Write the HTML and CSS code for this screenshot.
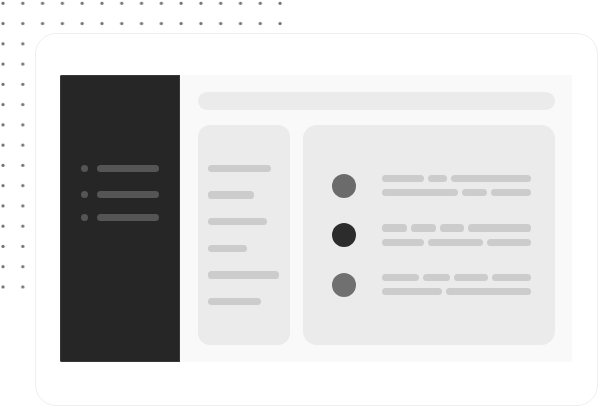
FILE: index.html
```html
<!DOCTYPE html>
<html>
<head>
<meta charset="utf-8">
<link rel="stylesheet" href="styles.css">
</head>
<body>
<svg class="dots" width="290" height="295" viewBox="0 0 290 295">
  <defs>
    <pattern id="dot" x="0" y="0" width="19.79" height="20.26" patternUnits="userSpaceOnUse">
      <circle cx="3" cy="3.3" r="1.6" fill="#707070"/>
    </pattern>
  </defs>
  <rect width="290" height="295" fill="url(#dot)"/>
</svg>
<div class="card">
  <div class="window">
    <aside class="sidebar">
      <div class="nav-item first"><span class="nav-dot"></span><span class="nav-line"></span></div>
      <div class="nav-item"><span class="nav-dot"></span><span class="nav-line"></span></div>
      <div class="nav-item"><span class="nav-dot"></span><span class="nav-line"></span></div>
    </aside>
    <main class="main">
      <div class="search"></div>
      <div class="panels">
        <div class="list-panel">
          <span class="bar" style="width:63px"></span>
          <span class="bar" style="width:46px"></span>
          <span class="bar" style="width:59px"></span>
          <span class="bar" style="width:39px"></span>
          <span class="bar" style="width:71px"></span>
          <span class="bar" style="width:53px"></span>
        </div>
        <div class="feed-panel">
          <div class="feed-row">
            <span class="avatar mid"></span>
            <div class="lines">
              <div class="line"><span class="seg" style="width:41.7px"></span><span class="seg" style="width:18.7px"></span><span class="seg grow"></span></div>
              <div class="line"><span class="seg" style="width:75.4px"></span><span class="seg" style="width:25px"></span><span class="seg grow"></span></div>
            </div>
          </div>
          <div class="feed-row">
            <span class="avatar dark"></span>
            <div class="lines">
              <div class="line"><span class="seg" style="width:24.7px"></span><span class="seg" style="width:24.7px"></span><span class="seg" style="width:24.6px"></span><span class="seg grow"></span></div>
              <div class="line"><span class="seg" style="width:41.7px"></span><span class="seg" style="width:55.3px"></span><span class="seg grow"></span></div>
            </div>
          </div>
          <div class="feed-row">
            <span class="avatar light"></span>
            <div class="lines">
              <div class="line"><span class="seg" style="width:36.7px"></span><span class="seg" style="width:26.6px"></span><span class="seg" style="width:34.7px"></span><span class="seg grow"></span></div>
              <div class="line"><span class="seg" style="width:59.4px"></span><span class="seg grow"></span></div>
            </div>
          </div>
        </div>
      </div>
    </main>
  </div>
</div>
</body>
</html>
```
FILE: styles.css
```css
html, body {
  margin: 0;
  padding: 0;
  background: #ffffff;
}
body {
  width: 600px;
  height: 406px;
  overflow: hidden;
  position: relative;
  font-family: "Liberation Sans", Arial, sans-serif;
}
.dots {
  position: absolute;
  left: 0;
  top: 0;
  z-index: 0;
}
.card {
  position: relative;
  z-index: 1;
  box-sizing: border-box;
  margin: 33px 0 0 35px;
  width: 563px;
  height: 373px;
  background: #ffffff;
  border: 1px solid #efefef;
  border-radius: 21px;
  padding: 41px 0 0 24px;
}
.window {
  display: flex;
  width: 512px;
  height: 287px;
}
.sidebar {
  box-sizing: border-box;
  width: 120px;
  flex: none;
  background: #262626;
  box-shadow: inset 0 0 0 1px #383838;
  border-radius: 2px 0 0 2px;
  padding: 89.5px 0 0 21px;
  display: flex;
  flex-direction: column;
  gap: 15.6px;
}
.nav-item {
  display: flex;
  align-items: center;
  gap: 9px;
  height: 7px;
}
.nav-item.first {
  margin-bottom: 4.1px;
}
.nav-dot {
  width: 7px;
  height: 7px;
  border-radius: 50%;
  background: #555555;
}
.nav-line {
  width: 62px;
  height: 7px;
  border-radius: 3.5px;
  background: #555555;
}
.main {
  box-sizing: border-box;
  flex: 1;
  background: #f9f9f9;
  padding: 17px 17px 17px 18px;
  display: flex;
  flex-direction: column;
  gap: 15px;
}
.search {
  height: 18px;
  border-radius: 9px;
  background: #ebebeb;
}
.panels {
  display: flex;
  gap: 13px;
  height: 220px;
}
.list-panel {
  box-sizing: border-box;
  width: 92px;
  flex: none;
  background: #ebebeb;
  border-radius: 12px;
  padding-left: 10px;
  display: flex;
  flex-direction: column;
  justify-content: center;
  gap: 19.4px;
}
.bar {
  display: block;
  height: 7.3px;
  border-radius: 3.6px;
  background: #cccccc;
}
.feed-panel {
  box-sizing: border-box;
  flex: 1;
  background: #ebebeb;
  border-radius: 14px;
  padding: 0 24px 0 28.7px;
  display: flex;
  flex-direction: column;
  justify-content: center;
  gap: 25.5px;
}
.feed-row {
  display: flex;
  align-items: center;
  gap: 26.6px;
}
.avatar {
  width: 24px;
  height: 24px;
  border-radius: 50%;
  flex: none;
}
.avatar.mid { background: #6b6b6b; }
.avatar.dark { background: #2c2c2c; }
.avatar.light { background: #707070; }
.lines {
  flex: 1;
  display: flex;
  flex-direction: column;
  gap: 7px;
}
.line {
  display: flex;
  gap: 4px;
}
.seg {
  display: block;
  height: 7.3px;
  border-radius: 3.6px;
  background: #cccccc;
  flex: none;
}
.seg.grow {
  flex: 1;
}
```
